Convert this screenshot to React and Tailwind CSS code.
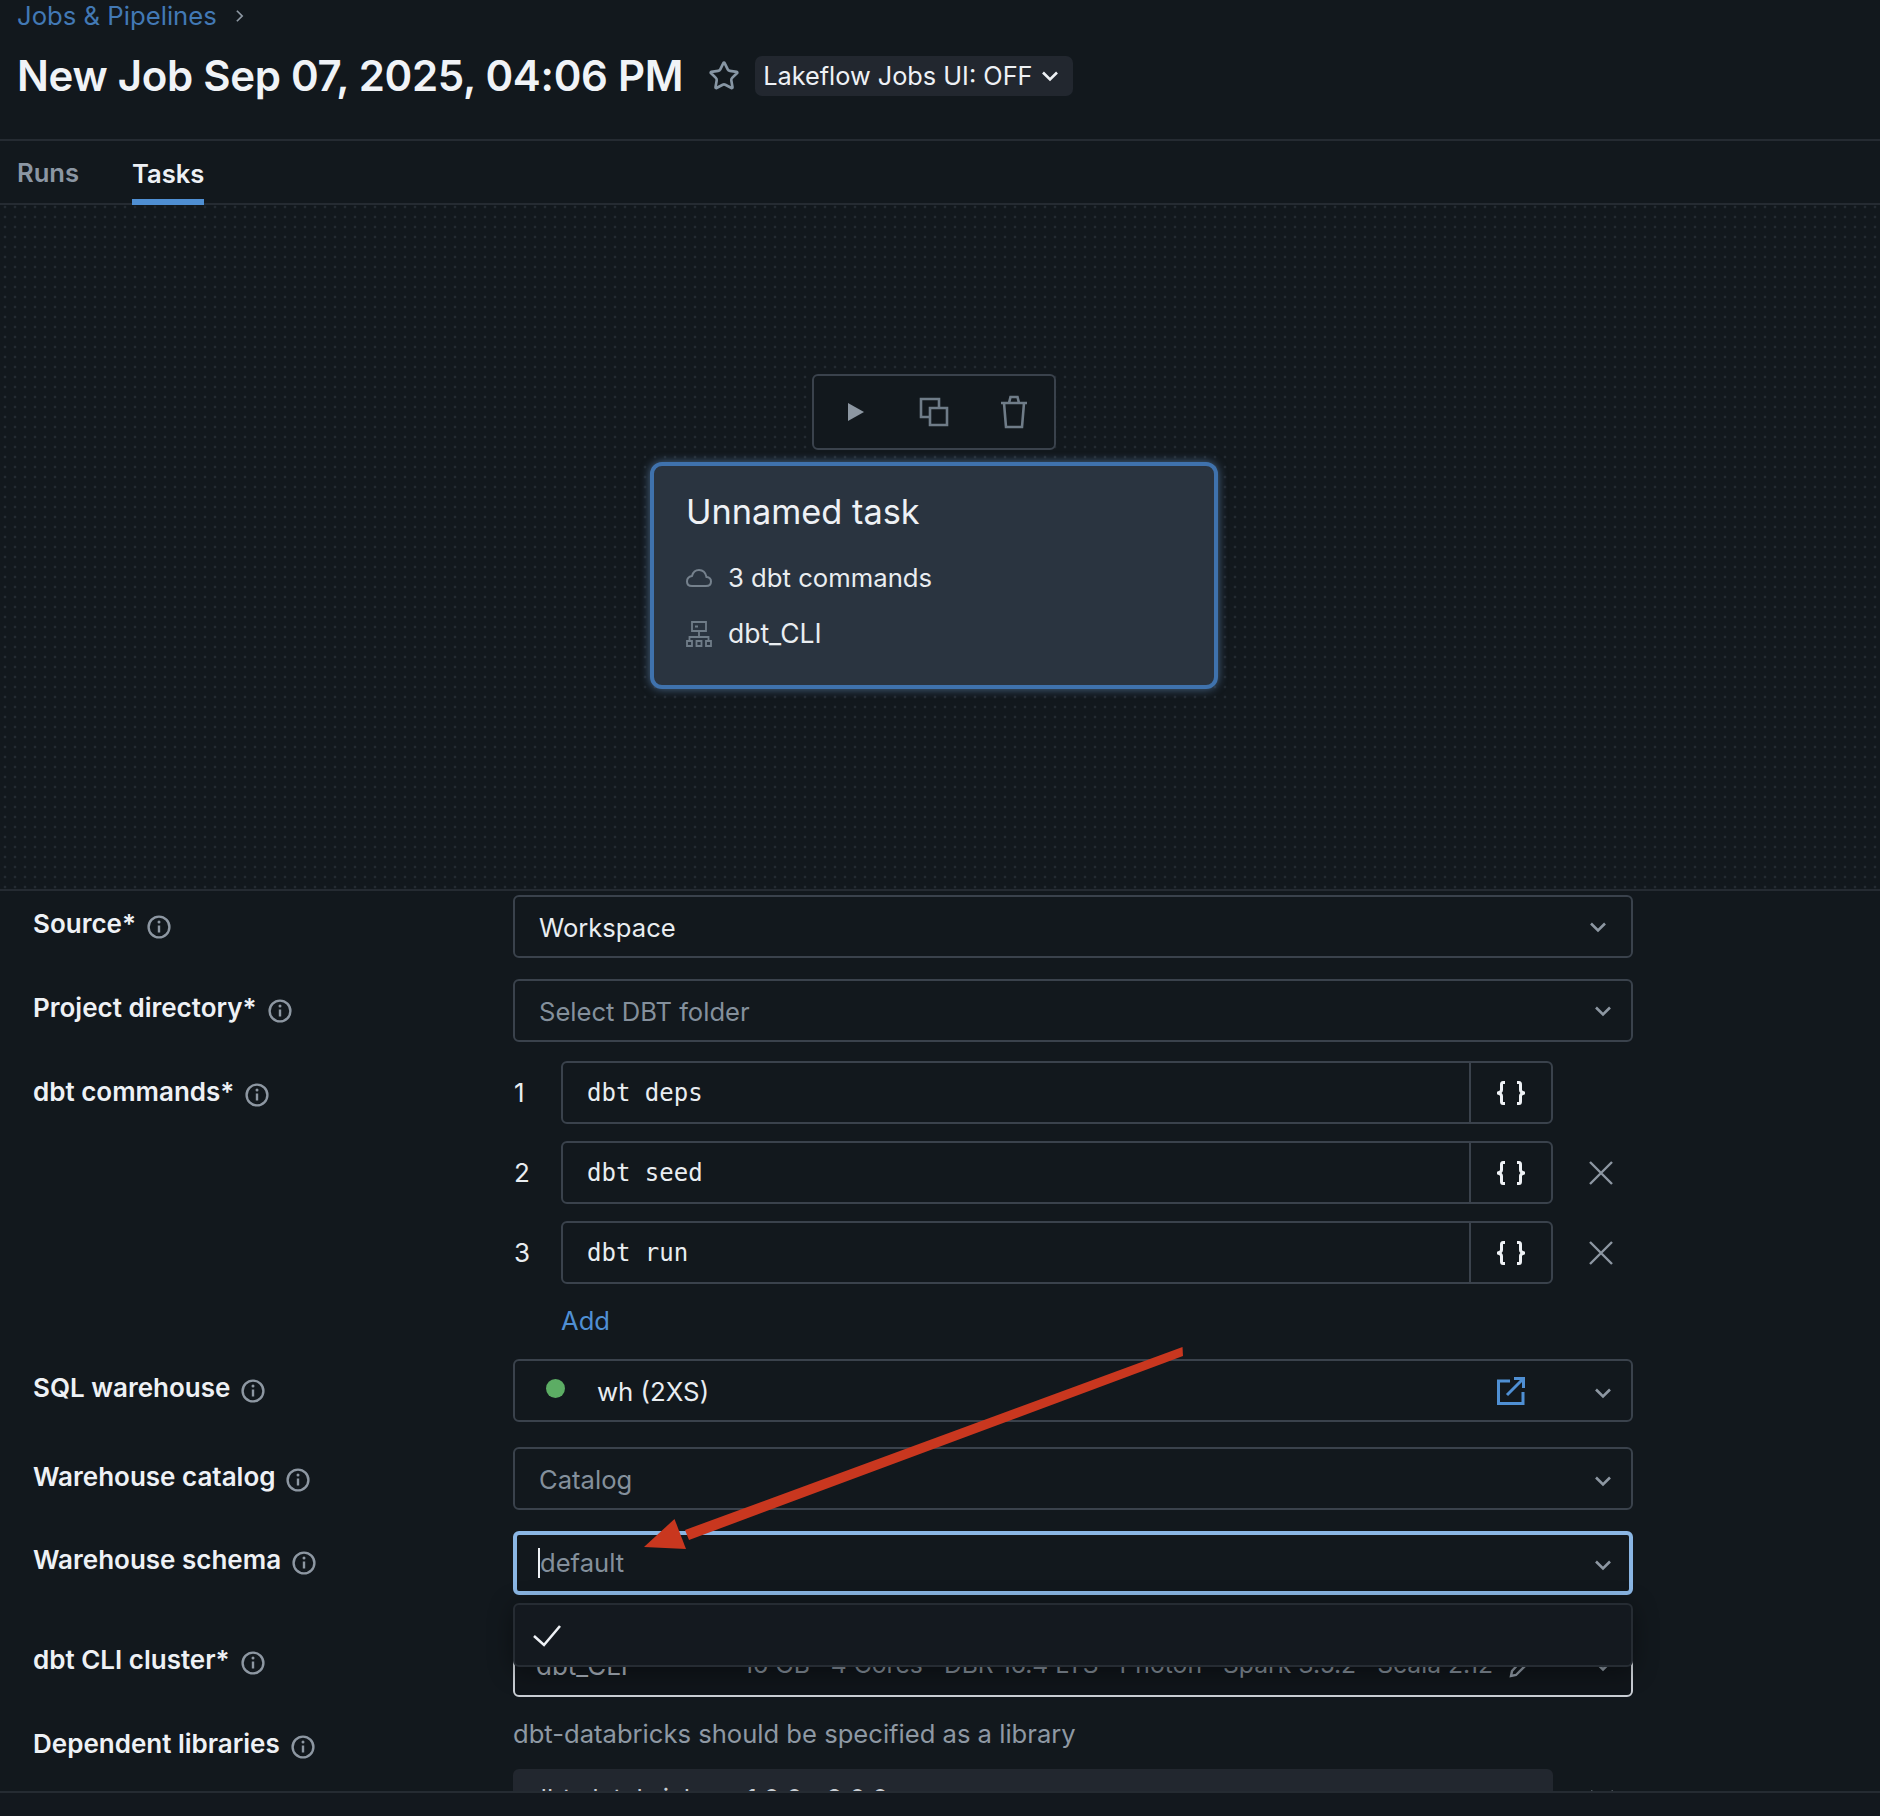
import { Star } from 'lucide-react'

const Chevron = ({ className = '' }) => (
  <svg viewBox="0 0 18 12" className={`h-[12px] w-[18px] shrink-0 text-[#8d97a2] ${className}`} fill="none" stroke="currentColor" strokeWidth="2.6">
    <path d="M2 2.5 9 9.5 16 2.5" />
  </svg>
)

const InfoIcon = () => (
  <svg viewBox="0 0 24 24" className="mt-[8px] h-[24px] w-[24px] shrink-0 text-[#8d97a2]" fill="none" stroke="currentColor">
    <circle cx="12" cy="12" r="10.4" strokeWidth="2.4" />
    <path d="M12 10.5v7" strokeWidth="2.4" />
    <circle cx="12" cy="7" r="1.5" fill="currentColor" stroke="none" />
  </svg>
)

const Braces = () => (
  <svg viewBox="0 0 28 24" className="h-[24px] w-[28px] text-[#eef1f5]" fill="none" stroke="currentColor" strokeWidth="3">
    <path d="M8 1.500H6Q4.500 1.500 4.500 3.500V9Q4.500 11 1 12 4.500 13 4.500 15V20.500Q4.500 22.500 6 22.500H8" />
    <path d="M20 1.500H22Q23.500 1.500 23.500 3.500V9Q23.500 11 27 12 23.500 13 23.500 15V20.500Q23.500 22.500 22 22.500H20" />
  </svg>
)

const CloseIcon = () => (
  <svg viewBox="0 0 24 24" className="h-[24px] w-[24px] text-[#8d97a2]" fill="none" stroke="currentColor" strokeWidth="2.4">
    <path d="M1 1 23 23M23 1 1 23" />
  </svg>
)

const Row = ({ label, labelClass, className = '', children }) => (
  <div className={`flex ${className}`}>
    <div className={`flex w-[513px] shrink-0 items-center gap-[11px] pl-[33px] text-[26px] font-semibold text-[#eef1f5] ${labelClass}`}>
      <span>{label}</span>
      <InfoIcon />
    </div>
    <div className="relative w-[1120px]">{children}</div>
  </div>
)

const SelectBox = ({ text, muted, chevronClass = 'mr-[19px]' }) => (
  <div className="flex h-[63px] items-center justify-between rounded-[6px] border-2 border-[#3a424c] pl-[24px]">
    <span className={`pt-[3px] text-[25.6px] ${muted ? 'text-[#84909c]' : 'text-[#e9edf1]'}`}>{text}</span>
    <Chevron className={chevronClass} />
  </div>
)

const commands = ['dbt deps', 'dbt seed', 'dbt run']

export default function App() {
  return (
    <div className="relative flex h-[1816px] w-[1880px] flex-col overflow-hidden bg-[#12181d] font-[Inter,sans-serif]">
      <header className="h-[141px] shrink-0 border-b-2 border-[#252b32] pl-[17px]">
        <div className="flex h-[32px] items-center gap-[18px] text-[25.7px] text-[#4279b5]">
          <span>Jobs &amp; Pipelines</span>
          <svg viewBox="0 0 10 16" className="h-[14px] w-[9px] text-[#8d97a2]" fill="none" stroke="currentColor" strokeWidth="2">
            <path d="M2 2 8 8 2 14" />
          </svg>
        </div>
        <div className="mt-[24px] flex h-[40px] items-center">
          <h1 className="text-[42px] font-semibold leading-none tracking-[-0.3px] text-[#f0f3f7]">New Job Sep 07, 2025, 04:06 PM</h1>
          <Star className="ml-[25px] h-[32px] w-[32px] text-[#8796a4]" strokeWidth={2} />
          <div className="ml-[15px] flex h-[40px] w-[318px] items-center gap-[8px] rounded-[7px] bg-[#22272f] pl-[8px] text-[25.3px] text-[#eef1f5]">
            <span>Lakeflow Jobs UI: OFF</span>
            <Chevron className="h-[10px] w-[14px] text-[#eef1f5]" />
          </div>
        </div>
      </header>

      <nav className="flex h-[64px] shrink-0 items-stretch gap-[52px] border-b-2 border-[#252b32] pl-[17px] text-[25.6px] font-semibold">
        <div className="flex w-[63px] items-center pt-[3px] text-[#8b96a3]">Runs</div>
        <div className="-mb-[2px] flex items-center border-b-[6px] border-[#4f8fd3] pt-[8px] text-[#eef1f5]">Tasks</div>
      </nav>

      <section className="h-[686px] shrink-0 border-b-2 border-[#252b32] bg-[radial-gradient(circle,#242b32_1.1px,transparent_1.7px)] bg-[size:10px_10px] bg-[position:0_-3px] pl-[650px] pt-[169px]">
        <div className="w-[568px]">
          <div className="mx-auto grid h-[76px] w-[244px] grid-cols-3 place-items-center rounded-[6px] border-2 border-[#3a424c] bg-[#12181d]">
            <svg viewBox="0 0 16 18" className="ml-[3px] h-[18px] w-[16px] text-[#8d97a2]" fill="currentColor">
              <path d="M0 0 16 9 0 18Z" />
            </svg>
            <svg viewBox="0 0 30 30" className="h-[30px] w-[30px] text-[#6f7c88]" fill="none" stroke="currentColor" strokeWidth="2.6">
              <path d="M11 20H2V2H20V11" />
              <path d="M11 11H28V28H11Z" />
            </svg>
            <svg viewBox="0 0 28 34" className="h-[34px] w-[28px] text-[#6f7c88]" fill="none" stroke="currentColor" strokeWidth="2.6">
              <path d="M1 8H27M9 8 10.500 2H17.500L19 8M4 8 6 32H22L24 8" />
            </svg>
          </div>
          <div className="mt-[12px] h-[227px] rounded-[12px] border-4 border-[#3f72ad] bg-[#2a3440] pl-[32px] pt-[22px] shadow-[0_0_10px_rgba(120,170,225,0.55)]">
            <div className="text-[34.3px] leading-[48px] text-[#eef1f5]">Unnamed task</div>
            <div className="mt-[14px] flex h-[56px] items-center gap-[16px] text-[25.7px] text-[#e9edf1]">
              <svg viewBox="0 0 26 18" className="h-[18px] w-[26px] text-[#75818d]" fill="none" stroke="currentColor" strokeWidth="2">
                <path d="M6 17H20Q25 17 25 12.500 25 8.500 20.500 8 19 1 13 1 7.500 1 6 7 1 8 1 12.500 1 17 6 17Z" />
              </svg>
              <span>3 dbt commands</span>
            </div>
            <div className="flex h-[56px] items-center gap-[16px] text-[26.500px] text-[#e9edf1]">
              <svg viewBox="0 0 26 26" className="h-[26px] w-[26px] text-[#6f7c88]" fill="none" stroke="currentColor" strokeWidth="1.8">
                <path d="M6 1H20V10H6ZM9 5.500H12M13 10V16M3.500 20V16H22.500V20M1 20H6V25H1ZM10.500 20H15.500V25H10.500ZM20 20H25V25H20Z" />
              </svg>
              <span>dbt_CLI</span>
            </div>
          </div>
        </div>
      </section>

      <main className="h-[900px] shrink-0 overflow-hidden pt-[4px]">
        <Row label="Source*" labelClass="h-[56px]">
          <SelectBox text="Workspace" chevronClass="mr-[24px]" />
        </Row>

        <Row label="Project directory*" labelClass="h-[56px]" className="mt-[21px]">
          <SelectBox text="Select DBT folder" muted />
        </Row>

        <Row label="dbt commands*" labelClass="h-[60px]" className="mt-[19px]">
          <div className="flex flex-col gap-[17px]">
            {commands.map((cmd, i) => (
              <div key={cmd} className="flex h-[63px] items-center">
                <span className="w-[48px] pl-[1px] text-[26px] text-[#e9edf1]">{i + 1}</span>
                <div className="flex h-full w-[992px] rounded-[6px] border-2 border-[#3a424c]">
                  <div className="flex flex-1 items-center pl-[24px] font-['DejaVu_Sans_Mono',monospace] text-[24px] text-[#e9edf1]">{cmd}</div>
                  <div className="flex w-[82px] items-center justify-center border-l-2 border-[#3a424c]">
                    <Braces />
                  </div>
                </div>
                {i > 0 && (
                  <div className="ml-[36px]">
                    <CloseIcon />
                  </div>
                )}
              </div>
            ))}
          </div>
          <div className="mt-[20px] h-[34px] pl-[48px] text-[25.6px] leading-[34px] text-[#4f8fd3]">Add</div>
        </Row>

        <Row label="SQL warehouse" labelClass="h-[56px]" className="mt-[21px]">
          <div className="flex h-[63px] items-center rounded-[6px] border-2 border-[#3a424c] pl-[31px]">
            <span className="-mt-[4px] h-[19px] w-[19px] rounded-full bg-[#5cad64]" />
            <span className="ml-[32px] flex-1 pt-[3px] text-[25.8px] text-[#e9edf1]">wh (2XS)</span>
            <svg viewBox="0 0 28 28" className="mr-[69px] h-[28px] w-[28px] text-[#4f8fd3]" fill="none" stroke="currentColor" strokeWidth="3">
              <path d="M13 4H1.500V26.500H26V15M10 18 26 2M17 1.500H26.500V11" />
            </svg>
            <Chevron className="mr-[19px] mt-[4px]" />
          </div>
        </Row>

        <Row label="Warehouse catalog" labelClass="h-[58px]" className="mt-[25px]">
          <SelectBox text="Catalog" muted chevronClass="mr-[19px] mt-[4px]" />
        </Row>

        <Row label="Warehouse schema" labelClass="h-[56px]" className="mt-[21px]">
          <div className="flex h-[64px] items-center justify-between rounded-[6px] border-4 border-[#8ab6e4] pl-[21px]">
            <div className="flex items-center">
              <span className="h-[30px] w-[2px] bg-[#eef1f5]" />
              <span className="text-[25.6px] text-[#84909c]">default</span>
            </div>
            <Chevron className="mr-[17px] mt-[3px]" />
          </div>
          <div className="absolute left-0 right-0 top-[72px] z-10 flex h-[64px] items-center rounded-[6px] border-2 border-[#262c33] bg-[#14191f] pl-[17px] shadow-[0_4px_24px_rgba(0,0,0,0.4)]">
            <svg viewBox="0 0 30 22" className="mt-[2px] h-[22px] w-[30px] text-[#eef1f5]" fill="none" stroke="currentColor" strokeWidth="2.6">
              <path d="M2 11 12 20 28 1" />
            </svg>
          </div>
        </Row>

        <Row label="dbt CLI cluster*" labelClass="h-[50px]" className="mt-[39px]">
          <div className="flex h-[63px] items-center rounded-[6px] border-2 border-[#c9ced4] bg-[#10151a] pl-[21px] text-[25px]">
            <span className="w-[207px] text-[26px] text-[#a3abb5]">dbt_CLI</span>
            <span className="w-[750px] -translate-y-[1px] whitespace-nowrap text-[24.700px] text-[#7f8994]">16 GB · 4 Cores · DBR 16.4 LTS · Photon · Spark 3.5.2 · Scala 2.12</span>
            <svg viewBox="0 0 20 20" className="ml-[16px] mt-[4px] h-[20px] w-[20px] text-[#8d97a2]" fill="none" stroke="currentColor" strokeWidth="2.4">
              <path d="M2 18 3 13 13 2 18 6 7 17Z" />
            </svg>
            <Chevron className="ml-[65px]" />
          </div>
        </Row>

        <Row label="Dependent libraries" labelClass="h-[64px]" className="mt-[14px]">
          <div className="flex h-[46px] items-center text-[25.6px] text-[#8e98a3]">dbt-databricks should be specified as a library</div>
          <div className="mt-[12px] flex items-center">
            <div className="flex h-[63px] w-[1040px] items-center rounded-[6px] bg-[#22272f] pb-[5px] pl-[18px] text-[26px] text-[#c9ced4]">dbt-databricks&gt;=1.0.0,&lt;2.0.0</div>
            <div className="ml-[37px] mt-[2px]">
              <CloseIcon />
            </div>
          </div>
        </Row>
      </main>

      <footer className="flex-1 border-t-2 border-[#252b32] bg-[#13181e]" />

      <svg viewBox="0 0 560 220" className="pointer-events-none absolute left-[635px] top-[1340px] z-20 h-[220px] w-[560px]">
        <path fill="#c9371f" d="M547.500 7 548 16 54 200 50 190Z" />
        <path fill="#c9371f" d="M9 207 39.500 179 51 209Z" />
      </svg>
    </div>
  )
}
